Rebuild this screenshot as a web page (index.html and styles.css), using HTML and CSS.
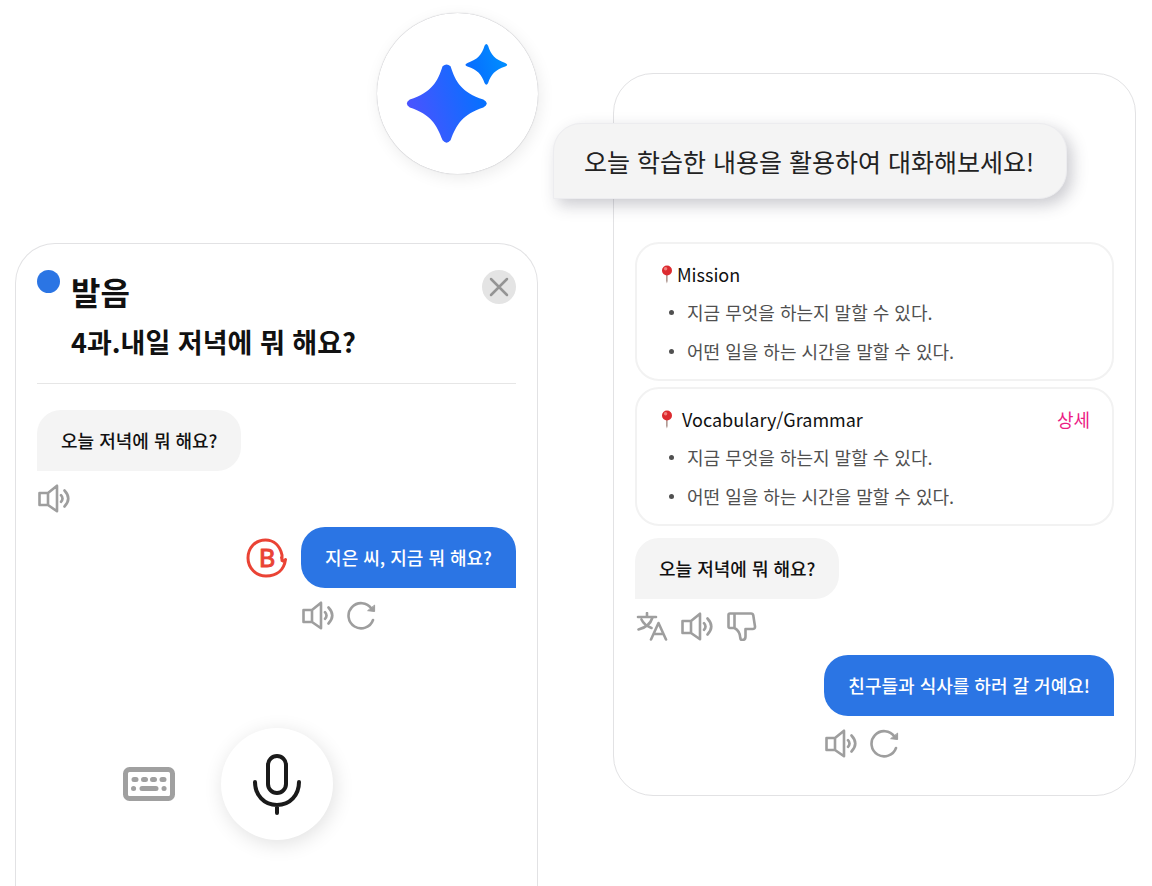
FILE: index.html
```
<!DOCTYPE html>
<html lang="ko">
<head>
    <meta charset="UTF-8">
    <meta name="viewport" content="width=device-width, initial-scale=1.0">
    <title>오늘 학습한 내용을 활용하여 대화해보세요!</title>
    <link rel="stylesheet" href="styles.css">
</head>
<body>

<!-- Shared icons -->
<svg class="sprite" aria-hidden="true">
    <symbol id="speaker" viewBox="0 0 32 29">
        <path d="M1.500 9h8.500v12h-8.500zM10 9L19 1.700v25.600L10 21" />
        <path d="M23 11.200q3 3.300 0 6.600M26.500 6.500q7.500 8 0 16" />
    </symbol>
    <symbol id="refresh" viewBox="0 0 29 29">
        <path d="M26 19A12.600 12.600 0 1 1 24.500 7.600" />
        <path class="fill" d="M27.600 4.500v6l-6.600-.8z" />
    </symbol>
    <symbol id="translate" viewBox="0 0 31 29">
        <path d="M1.500 5h18M10.500 1v4M16 5.500C14 12 8 16 2 17.500M5 7.500c2 4.500 6 7 10 8.500M14.500 27.500L22 11l7.500 16.500M17.500 22h9" />
    </symbol>
    <symbol id="dislike" viewBox="0 0 30 29">
        <path d="M1.500 3q0-1.500 1.500-1.500h4.500V16H3q-1.500 0-1.500-1.500zM7.500 1.500h16.500q2 0 2.300 2l1.700 11q.2 2.500-2.500 2.500h-7v7.500q0 3.500-3.500 3.500-1.500 0-1.700-2-.3-7-5.800-10" />
    </symbol>
    <symbol id="pin" viewBox="0 0 12 19">
        <path d="M5.100 9h1.500v7l-.7 2.500-.8-2.500z" fill="#a98f88" />
        <circle cx="6" cy="5.500" r="5" fill="#dc2b30" />
        <circle cx="4.600" cy="3.800" r="1.700" fill="#f0807c" />
    </symbol>
</svg>

<main class="page">
    <section class="column">
        <div class="ai-badge">
            <svg viewBox="0 0 162 162" aria-hidden="true">
                <defs>
                    <linearGradient id="sparkle" gradientUnits="userSpaceOnUse" x1="30" y1="90" x2="130" y2="60">
                        <stop offset="0" stop-color="#4a53ff" />
                        <stop offset="0.7" stop-color="#0870ff" />
                        <stop offset="1" stop-color="#008cff" />
                    </linearGradient>
                </defs>
                <path fill="url(#sparkle)" d="M66 53.500Q70 50 74 53.500C79 69 85 80 107 87Q114 91 107 95C86 102 80 112 74 128Q70 133 66 128C60 112 54 102 33 95Q27 91 33 87C55 80 61 69 66 53.500Z" />
                <path fill="url(#sparkle)" d="M108.200 33Q110 29.500 111.800 33C114.500 42 119 47 129 50.200Q133 52 129 53.800C119 57 114.500 62 111.800 70.500Q110 74 108.200 70.500C105.500 62 101 57 91 53.800Q87 52 91 50.200C101 47 105.500 42 108.200 33Z" />
            </svg>
        </div>

        <div class="phone phone-speaking">
            <header class="lesson">
                <span class="dot"></span>
                <div class="lesson-text">
                    <h1>발음</h1>
                    <h2>4과.내일 저녁에 뭐 해요?</h2>
                </div>
                <button class="close" type="button" aria-label="닫기">
                    <svg viewBox="0 0 34 34"><path d="M9 9l16 16M25 9L9 25" /></svg>
                </button>
            </header>

            <div class="chat">
                <p class="bubble">오늘 저녁에 뭐 해요?</p>
                <div class="actions">
                    <button type="button" aria-label="듣기"><svg class="icon"><use href="#speaker" /></svg></button>
                </div>
                <div class="mine">
                    <div class="answer">
                        <svg class="grade" viewBox="0 0 42 40" role="img" aria-label="B">
                            <path d="M36 22.500V17C34 8 28 2 19.500 2 9 2 2 10 2 20s8 18 18 18c11 0 18-6 19.500-16.500q-3.500 4-4-2" />
                            <text x="21" y="29" text-anchor="middle">B</text>
                        </svg>
                        <p class="bubble bubble-mine">지은 씨, 지금 뭐 해요?</p>
                    </div>
                    <div class="actions">
                        <button type="button" aria-label="듣기"><svg class="icon"><use href="#speaker" /></svg></button>
                        <button type="button" aria-label="다시"><svg class="icon icon-small"><use href="#refresh" /></svg></button>
                    </div>
                </div>
            </div>

            <div class="controls">
                <button class="keyboard" type="button" aria-label="키보드">
                    <svg viewBox="0 0 52 34">
                        <rect x="2.500" y="2.500" width="47" height="29" rx="4" />
                        <path d="M11 12.500h2M20.500 12.500h2M29.500 12.500h2M39 12.500h2M10.500 21.500h.1M19 21.500h14M41 21.500h.1" />
                    </svg>
                </button>
                <button class="mic" type="button" aria-label="말하기">
                    <svg viewBox="0 0 50 62">
                        <rect x="16" y="3" width="18" height="37" rx="9" />
                        <path d="M3 29c0 13 9 23 22 23s22-10 22-23M25 52v8" />
                    </svg>
                </button>
            </div>
        </div>
    </section>

    <section class="column">
        <div class="phone phone-mission">
            <p class="banner">오늘 학습한 내용을 활용하여 대화해보세요!</p>

            <article class="card">
                <h3><svg class="pin"><use href="#pin" /></svg>Mission</h3>
                <ul>
                    <li>지금 무엇을 하는지 말할 수 있다.</li>
                    <li>어떤 일을 하는 시간을 말할 수 있다.</li>
                </ul>
            </article>
            <article class="card">
                <h3><svg class="pin"><use href="#pin" /></svg>&nbsp;Vocabulary/Grammar <a href="#detail">상세</a></h3>
                <ul>
                    <li>지금 무엇을 하는지 말할 수 있다.</li>
                    <li>어떤 일을 하는 시간을 말할 수 있다.</li>
                </ul>
            </article>

            <div class="chat">
                <p class="bubble">오늘 저녁에 뭐 해요?</p>
                <div class="actions">
                    <button type="button" aria-label="번역"><svg class="icon"><use href="#translate" /></svg></button>
                    <button type="button" aria-label="듣기"><svg class="icon"><use href="#speaker" /></svg></button>
                    <button type="button" aria-label="싫어요"><svg class="icon"><use href="#dislike" /></svg></button>
                </div>
                <div class="mine">
                    <p class="bubble bubble-mine">친구들과 식사를 하러 갈 거예요!</p>
                    <div class="actions">
                        <button type="button" aria-label="듣기"><svg class="icon"><use href="#speaker" /></svg></button>
                        <button type="button" aria-label="다시"><svg class="icon icon-small"><use href="#refresh" /></svg></button>
                    </div>
                </div>
            </div>
        </div>
    </section>
</main>

</body>
</html>
```
FILE: styles.css
```
* {
    box-sizing: border-box;
}

body {
    margin: 0;
    background: #ffffff;
    color: #111111;
    font-family: "Noto Sans CJK KR", sans-serif;
}

h1, h2, h3, p, ul {
    margin: 0;
    padding: 0;
}

button {
    padding: 0;
    border: none;
    background: none;
    cursor: pointer;
}

svg {
    display: block;
    fill: none;
    stroke-linecap: round;
    stroke-linejoin: round;
}

.sprite {
    position: absolute;
    width: 0;
    height: 0;
}

/* Two phones side by side */
.page {
    display: grid;
    grid-template-columns: 1fr 1fr;
    gap: 75px;
    min-height: 100vh;
    padding: 0 16px 0 15px;
}

.column {
    display: flex;
    flex-direction: column;
    min-width: 0;
}

.phone {
    padding: 0 21px;
    border: 1px solid #e2e2e4;
    border-radius: 40px;
    background: #ffffff;
}

.phone-speaking {
    flex: 1;
    padding-top: 26px;
    padding-bottom: 45px;
    border-bottom: none;
    border-radius: 40px 40px 0 0;
}

.phone-mission {
    margin: 73px 0;
    padding-top: 49px;
    padding-bottom: 37px;
}

.ai-badge {
    align-self: flex-end;
    width: 161px;
    margin: 13px 0 69px;
    border-radius: 50%;
    background: #ffffff;
    box-shadow: 0 0 1px #9a9aa2, 2px 4px 16px rgba(0, 0, 0, 0.08);
}

/* Lesson header */
.lesson {
    display: flex;
    align-items: flex-start;
    padding-bottom: 13px;
    border-bottom: 1px solid #e6e6e6;
}

.dot {
    width: 23px;
    height: 23px;
    margin-right: 11px;
    border-radius: 50%;
    background: #2b75e4;
}

.lesson-text {
    flex: 1;
}

.lesson h1 {
    font-size: 32px;
    line-height: 42px;
}

.lesson h2 {
    padding-top: 2px;
    font-size: 27px;
    line-height: 56px;
}

.close {
    width: 34px;
    height: 34px;
    border-radius: 50%;
    background: #e4e4e4;
    stroke: #949494;
    stroke-width: 2.5;
}

/* Chat */
.chat {
    display: flex;
    flex-direction: column;
    align-items: flex-start;
}

.phone-speaking .chat {
    margin-top: 26px;
}

.phone-mission .chat {
    margin-top: 12px;
}

.bubble {
    padding: 0 24px;
    border-radius: 24px 24px 24px 0;
    background: #f4f4f4;
    font-size: 18px;
    font-weight: 500;
    line-height: 61px;
    white-space: nowrap;
}

.bubble-mine {
    border-radius: 24px 24px 0 24px;
    background: #2b75e4;
    color: #ffffff;
}

.mine {
    align-self: flex-end;
    margin-top: 14px;
}

.answer {
    display: flex;
    align-items: center;
    gap: 13px;
}

.grade {
    width: 42px;
    height: 40px;
    stroke: #ea4335;
    stroke-width: 3;
}

.grade text {
    fill: #ea4335;
    stroke-width: 1;
    font-family: Lato, sans-serif;
    font-size: 25px;
}

.actions {
    display: flex;
    gap: 13px;
    margin-top: 13px;
    padding-left: 1px;
}

/* Lines the icons up with the bubble, past the grade mark */
.answer + .actions {
    padding-left: 56px;
}

.icon {
    width: 32px;
    height: 29px;
    stroke: #9e9e9e;
    stroke-width: 2.6;
}

.icon-small {
    width: 29px;
}

.fill {
    fill: #9e9e9e;
    stroke-width: 1;
}

/* Bottom controls */
.controls {
    display: grid;
    grid-template-columns: 1fr auto 1fr;
    align-items: center;
    margin-top: 98px;
}

.keyboard {
    justify-self: end;
    width: 52px;
    margin-right: 46px;
    stroke: #a0a0a0;
    stroke-width: 5;
}

.mic {
    display: flex;
    align-items: center;
    justify-content: center;
    width: 112px;
    height: 112px;
    border-radius: 50%;
    background: #ffffff;
    box-shadow: 2px 4px 20px rgba(0, 0, 0, 0.12);
}

.mic svg {
    width: 50px;
    height: 62px;
    stroke: #1a1a1a;
    stroke-width: 4;
}

/* Banner hangs out of the left side of the phone */
.banner {
    width: fit-content;
    margin: 0 0 43px -82px;
    padding: 0 32px 0 30px;
    border: 1px solid #ececef;
    border-radius: 28px 28px 28px 0;
    background: #f4f4f4;
    box-shadow: 5px 6px 16px rgba(50, 50, 70, 0.26);
    color: #222222;
    font-size: 25px;
    line-height: 74px;
    white-space: nowrap;
}

/* Mission cards */
.card {
    padding: 11px 22px 8px;
    border: 2px solid #f2f2f2;
    border-radius: 24px;
}

.card + .card {
    margin-top: 6px;
}

.card h3 {
    display: flex;
    align-items: center;
    gap: 4px;
    font-size: 18px;
    font-weight: 400;
    line-height: 38px;
}

.card h3 a {
    margin-left: auto;
    color: #ec1c85;
    text-decoration: none;
}

.pin {
    width: 12px;
    height: 19px;
    margin-left: 2px;
}

.card ul {
    color: #505050;
    font-size: 18px;
    line-height: 39px;
    list-style: none;
}

.card li {
    display: flex;
    align-items: center;
    gap: 13px;
    padding-left: 10px;
}

.card li::before {
    content: "";
    width: 5px;
    height: 5px;
    border-radius: 50%;
    background: #505050;
}
```
